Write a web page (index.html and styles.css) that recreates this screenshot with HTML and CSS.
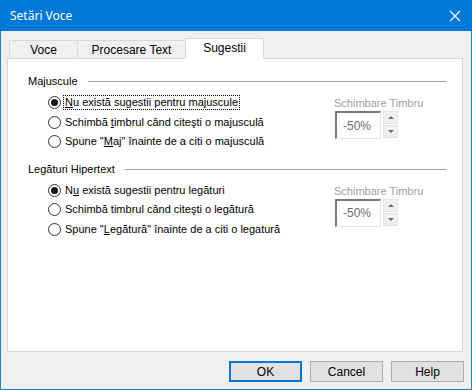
FILE: index.html
```html
<!DOCTYPE html>
<html>
<head>
<meta charset="utf-8">
<link rel="stylesheet" href="styles.css">
</head>
<body>
<div class="window">
  <div class="titlebar">
    <span class="title">Setări Voce</span>
    <svg class="close" width="12" height="12" viewBox="0 0 12 12"><path d="M1 1 L11 11 M11 1 L1 11" stroke="#fff" stroke-width="1.1" fill="none"/></svg>
  </div>
  <div class="tabs">
    <div class="tab t1">Voce</div>
    <div class="tab t2">Procesare Text</div>
    <div class="tab t3 active">Sugestii</div>
  </div>
  <div class="panel">
    <div class="group">
      <div class="ghead"><span>Majuscule</span><span class="gline"></span></div>
      <div class="gbody">
        <div class="radios">
          <div class="row"><span class="radio on"></span><span class="lbl focus"><u>N</u>u există sugestii pentru majuscule</span></div>
          <div class="row"><span class="radio"></span><span class="lbl">Schimbă <u>t</u>imbrul când citeşti o majusculă</span></div>
          <div class="row"><span class="radio"></span><span class="lbl">Spune "<u>M</u>aj" înainte de a citi o majusculă</span></div>
        </div>
        <div class="spin">
          <div class="slabel">Schimbare Timbru</div>
          <div class="sctl">
            <div class="sbox">-50%</div>
            <div class="sbtns">
              <div class="sbtn"><span class="up"></span></div>
              <div class="sbtn"><span class="down"></span></div>
            </div>
          </div>
        </div>
      </div>
    </div>
    <div class="group g2">
      <div class="ghead"><span>Legături Hipertext</span><span class="gline"></span></div>
      <div class="gbody">
        <div class="radios">
          <div class="row"><span class="radio on"></span><span class="lbl">N<u>u</u> există sugestii pentru legături</span></div>
          <div class="row"><span class="radio"></span><span class="lbl">Schimbă timbrul când citeşti o legătură</span></div>
          <div class="row"><span class="radio"></span><span class="lbl">Spune "<u>L</u>egătură" înainte de a citi o legatură</span></div>
        </div>
        <div class="spin">
          <div class="slabel">Schimbare Timbru</div>
          <div class="sctl">
            <div class="sbox">-50%</div>
            <div class="sbtns">
              <div class="sbtn"><span class="up"></span></div>
              <div class="sbtn"><span class="down"></span></div>
            </div>
          </div>
        </div>
      </div>
    </div>
  </div>
  <div class="buttons">
    <div class="btn default">OK</div>
    <div class="btn">Cancel</div>
    <div class="btn">Help</div>
  </div>
</div>
</body>
</html>
```
FILE: styles.css
```css
html, body { margin: 0; padding: 0; background: #f0f0f0; }
.window {
  width: 472px; height: 390px; box-sizing: border-box;
  border: 1px solid #1883d7; border-top: none;
  background: #f0f0f0;
  font-family: "Liberation Sans", Arial, sans-serif; font-size: 11px; color: #000;
  display: flex; flex-direction: column;
}
.titlebar {
  height: 31px; background: #0078d7; margin: 0 -1px;
  display: flex; align-items: center; justify-content: space-between;
  padding: 0 10px 0 10px;
}
.title { color: #fff; font-family: "Noto Sans", "Open Sans", sans-serif; font-size: 12px; }
.close { margin-right: 1px; }
.tabs { display: flex; align-items: flex-end; height: 20px; margin-top: 7px; padding-left: 8px; position: relative; z-index: 1; }
.tab {
  height: 18px; box-sizing: border-box; border: 1px solid #d9d9d9; border-bottom: none;
  background: #f0f0f0; display: flex; align-items: center; justify-content: center;
  font-size: 12px; padding-top: 1px;
}
.t1 { width: 69px; }
.t2 { width: 109px; margin-left: -1px; }
.t3 { width: 79px; margin-left: -1px; }
.tab.active { height: 21px; margin-bottom: -1px; background: #fff; padding-top: 0; padding-bottom: 2px; }
.panel {
  margin-left: 6px; width: 456px; height: 294px; box-sizing: border-box;
  border: 1px solid #d9d9d9; background: #fff;
  padding: 16px 16px 0 20px;
}
.ghead { display: flex; align-items: center; height: 13px; line-height: 13px; }
.gline { flex: 1; height: 1px; background: #a0a0a0; margin-left: 10px; }
.g2 { margin-top: 11px; }
.gbody { display: flex; padding-left: 20px; margin-top: 5px; }
.radios { width: 286px; display: flex; flex-direction: column; }
.row { height: 19.5px; display: flex; align-items: center; }
.radio {
  width: 13px; height: 13px; box-sizing: border-box; border: 1px solid #333; border-radius: 50%;
  background: #fff; display: flex; align-items: center; justify-content: center; margin-right: 4px;
}
.radio.on::after { content: ""; width: 7px; height: 7px; border-radius: 50%; background: #1a1a1a; }
.lbl { line-height: 13px; }
.focus { outline: 1px dotted #000; outline-offset: 0; padding: 0 1px; margin-left: -1px; }
.spin { padding-top: 4px; }
.slabel { color: #a0a0a0; line-height: 13px; height: 13px; margin-bottom: 1px; }
.sctl { display: flex; gap: 2px; margin-left: 1px; }
.sbox {
  width: 46px; height: 28px; box-sizing: border-box;
  border-top: 2px solid #7a7a7a; border-left: 2px solid #7a7a7a;
  border-right: 1px solid #e3e3e3; border-bottom: 1px solid #e3e3e3;
  color: #6d6d6d; font-size: 12px; display: flex; align-items: center; padding-left: 6px;
}
.sbtns { display: flex; flex-direction: column; gap: 1px; }
.sbtn {
  width: 15px; height: 13px; box-sizing: border-box; background: #f0f0f0; border: 1px solid #e3e3e3;
  display: flex; align-items: center; justify-content: center;
}
.up { width: 0; height: 0; border-left: 3px solid transparent; border-right: 3px solid transparent; border-bottom: 3px solid #6d6d6d; }
.down { width: 0; height: 0; border-left: 3px solid transparent; border-right: 3px solid transparent; border-top: 3px solid #6d6d6d; }
.buttons { display: flex; justify-content: flex-end; gap: 8px; margin-top: 9px; padding-right: 7px; }
.btn {
  width: 73px; height: 21px; box-sizing: border-box; background: #e1e1e1; border: 1px solid #adadad;
  display: flex; align-items: center; justify-content: center; font-size: 12px;
}
.btn.default { border: 2px solid #0078d7; }
```
